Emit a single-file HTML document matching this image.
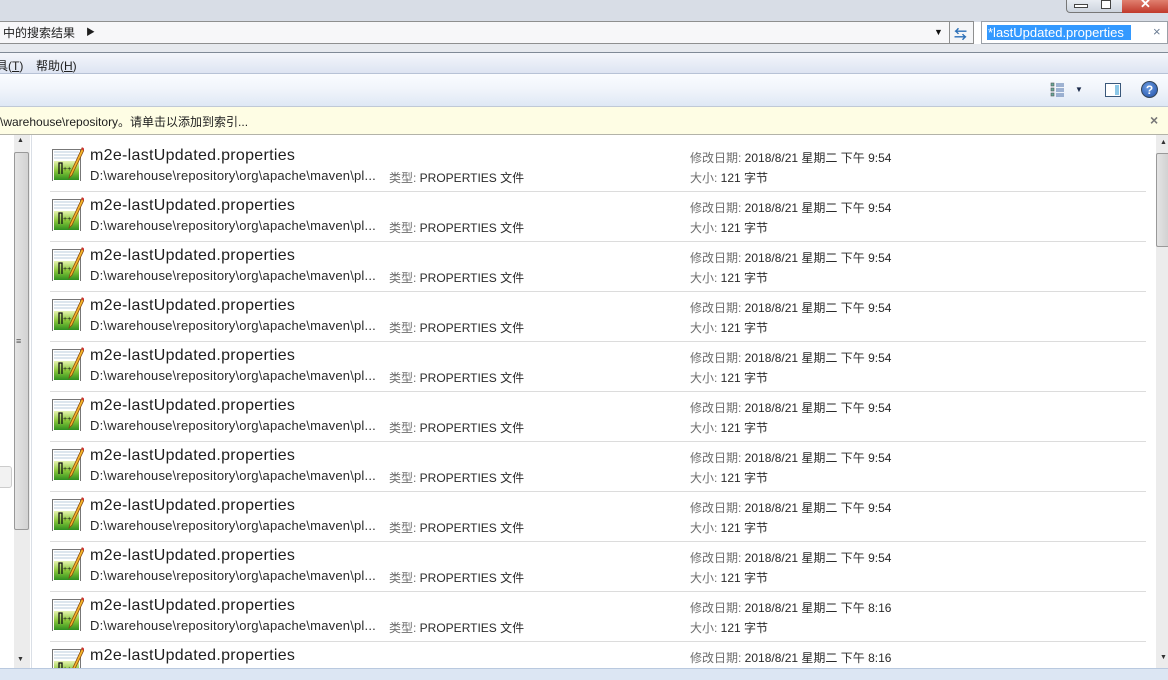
<!DOCTYPE html><html><head><meta charset="utf-8"><style>
*{margin:0;padding:0;box-sizing:border-box}
html,body{width:1168px;height:680px;overflow:hidden}
body{position:relative;background:#fff;font-family:"Liberation Sans","Noto Sans CJK SC",sans-serif;font-size:12px;color:#1e1e1e}
.a{position:absolute}
#rows{position:absolute;left:0;top:135px;width:1156px;height:533px;overflow:hidden}
.row{position:absolute;left:50px;width:1096px;height:50px;border-bottom:1px solid #dcdcdc}
.t{position:absolute;left:40px;top:5px;font-size:16px;letter-spacing:.3px;color:#1e1e1e}
.p{position:absolute;left:40px;top:26px;font-size:13px;letter-spacing:.2px;color:#2a2a2a}
.ty{position:absolute;left:339px;top:27px;font-size:12px;color:#2a2a2a}
.d{position:absolute;left:640px;top:7px;font-size:12px;color:#2a2a2a}
.s{position:absolute;left:640px;top:27px;font-size:12px;color:#2a2a2a}
.g{color:#6d6d6d}
.ic{position:absolute;left:2px;top:5px}
</style></head><body>
<div class="a" style="left:0;top:0;width:1168px;height:22px;background:#d8dde6"></div>
<div class="a" style="left:1066px;top:0;width:102px;height:13px;border:1px solid #777;border-top:none;border-radius:0 0 4px 4px;background:linear-gradient(#e8ecf2,#cdd4de)"></div>
<div class="a" style="left:1122px;top:0;width:46px;height:13px;background:linear-gradient(#e08070,#c0392b)"></div>
<div class="a" style="left:1074px;top:4px;width:14px;height:4px;border:1px solid #444;background:#fff"></div>
<div class="a" style="left:1101px;top:0;width:10px;height:9px;border:1px solid #444;background:#fff"></div>
<div class="a" style="left:1140px;top:-4px;color:#fff;font-weight:bold;font-size:13px">✕</div>
<div class="a" style="left:0;top:21px;width:950px;height:23px;background:#f7f7f9;border:1px solid #8e8f8f;border-left:none"></div>
<div class="a" style="left:3px;top:24px;font-size:12px">中的搜索结果</div>
<div class="a" style="left:86px;top:25px;font-size:9px">▶</div>
<div class="a" style="left:934px;top:27px;font-size:9px;color:#111">▼</div>
<div class="a" style="left:949px;top:21px;width:25px;height:23px;border:1px solid #8e8f8f;background:#f4f5f7"></div>
<div class="a" style="left:954px;top:24px;font-size:13px;color:#2a6fb8;font-weight:bold">⇆</div>
<div class="a" style="left:981px;top:21px;width:187px;height:23px;border:1px solid #9aa0a8;background:#fff"></div>
<div class="a" style="left:987px;top:25px;height:15px;width:144px;background:#3399ff;color:#fff;font-size:13px;line-height:15px;padding-left:1px">*lastUpdated.properties</div>
<div class="a" style="left:1153px;top:24px;color:#6a7c93;font-size:13px">×</div>
<div class="a" style="left:0;top:44px;width:1168px;height:9px;background:#e6e9ee;border-bottom:1px solid #808a96"></div>
<div class="a" style="left:0;top:53px;width:1168px;height:21px;background:linear-gradient(#f4f6fb,#dde4f2);border-bottom:1px solid #b7c2d6"></div>
<div class="a" style="left:-4px;top:57px">具(<u>T</u>)</div>
<div class="a" style="left:36px;top:57px">帮助(<u>H</u>)</div>
<div class="a" style="left:0;top:74px;width:1168px;height:33px;background:linear-gradient(#fafcff 0,#f1f5fb 45%,#dfe8f5 100%);border-bottom:1px solid #c0c9d6"></div>
<div class="a" style="left:1050px;top:82px;width:16px;height:16px;">
<svg width="16" height="16"><rect x="1" y="1" width="3" height="3" fill="#6a9" stroke="#555" stroke-width=".6"/><rect x="1" y="6" width="3" height="3" fill="#6a9" stroke="#555" stroke-width=".6"/><rect x="1" y="11" width="3" height="3" fill="#6a9" stroke="#555" stroke-width=".6"/><path d="M6 2h8M6 4h8M6 7h8M6 9h8M6 12h8M6 14h8" stroke="#4a6ea8" stroke-width="1"/></svg></div>
<div class="a" style="left:1075px;top:85px;font-size:8px;color:#1b2a4a">▼</div>
<div class="a" style="left:1105px;top:83px;width:16px;height:14px;border:1px solid #39577a;background:#fff"><div style="position:absolute;right:1px;top:1px;width:4px;height:10px;background:#8cc8e8"></div></div>
<div class="a" style="left:1141px;top:81px;width:17px;height:17px;border-radius:50%;background:radial-gradient(circle at 40% 35%,#6c9ce0,#1f4fa8);border:1px solid #345;color:#fff;font-weight:bold;font-size:12px;text-align:center;line-height:16px">?</div>
<div class="a" style="left:0;top:107px;width:1168px;height:28px;background:#fefde4;border-bottom:1px solid #b3b3a8"></div>
<div class="a" style="left:0;top:113px;font-size:12px">\warehouse\repository。请单击以添加到索引...</div>
<div class="a" style="left:1150px;top:112px;color:#777;font-size:14px;font-weight:bold">×</div>
<div class="a" style="left:0;top:135px;width:32px;height:533px;background:#fff;border-right:1px solid #dadfe6"></div>
<div class="a" style="left:14px;top:135px;width:16px;height:533px;background:#ececec"></div>
<div class="a" style="left:14px;top:152px;width:15px;height:378px;background:linear-gradient(90deg,#e4e4e4,#d2d2d2);border:1px solid #999;border-radius:2px"></div>
<div class="a" style="left:16px;top:336px;font-size:9px;color:#555">≡</div>
<div class="a" style="left:17px;top:137px;font-size:7px;color:#333">▲</div>
<div class="a" style="left:17px;top:656px;font-size:7px;color:#333">▼</div>
<div class="a" style="left:-4px;top:466px;width:16px;height:22px;border:1px solid #ccc;border-radius:3px;background:#f2f2f2"></div>
<div id="rows"></div>
<div class="a" style="left:1156px;top:135px;width:12px;height:533px;background:#ececec"></div>
<div class="a" style="left:1156px;top:153px;width:12px;height:94px;background:linear-gradient(90deg,#e4e4e4,#d2d2d2);border:1px solid #999;border-right:none;border-radius:2px 0 0 2px"></div>
<div class="a" style="left:1160px;top:139px;font-size:7px;color:#333">▲</div>
<div class="a" style="left:1160px;top:654px;font-size:7px;color:#333">▼</div>
<div class="a" style="left:0;top:668px;width:1168px;height:12px;background:#dce6f3;border-top:1px solid #b9c9df"></div>
<script>
var h='';for(var i=0;i<11;i++){var t=i<9?'9:54':'8:16';h+='<div class="row" style="top:'+(7+i*50)+'px"><svg class="ic" width="32" height="34"><rect x="0.5" y="2.5" width="28" height="32" fill="#fff" stroke="#777"/><path d="M2 5h25M2 8h25M2 11h25" stroke="#bcd" stroke-width="1"/><rect x="2" y="14" width="25" height="19" fill="url(#gg'+i+')"/><defs><linearGradient id="gg'+i+'" x1="0" y1="0" x2="0" y2="1"><stop offset="0" stop-color="#e6f3b0"/><stop offset=".5" stop-color="#8bc83a"/><stop offset="1" stop-color="#2f8f1f"/></linearGradient></defs><path d="M7 27V16h3v11" stroke="#111" fill="none" stroke-width="1.3"/><text x="11" y="24" font-size="7" font-family="Liberation Sans" fill="#111">++</text><path d="M30 1L18 27l-1 4 3-3L32 3z" fill="#f4b52a" stroke="#8a4a10" stroke-width=".8"/><path d="M30 1l2 2" stroke="#c33" stroke-width="2"/></svg><div class="t">m2e-lastUpdated.properties</div><div class="p">D:\\warehouse\\repository\\org\\apache\\maven\\pl...</div><div class="ty"><span class="g">类型:</span> PROPERTIES 文件</div><div class="d"><span class="g">修改日期:</span> 2018/8/21 星期二 下午 '+t+'</div><div class="s"><span class="g">大小:</span> 121 字节</div></div>';}
document.getElementById('rows').innerHTML=h;
</script>
</body></html>
